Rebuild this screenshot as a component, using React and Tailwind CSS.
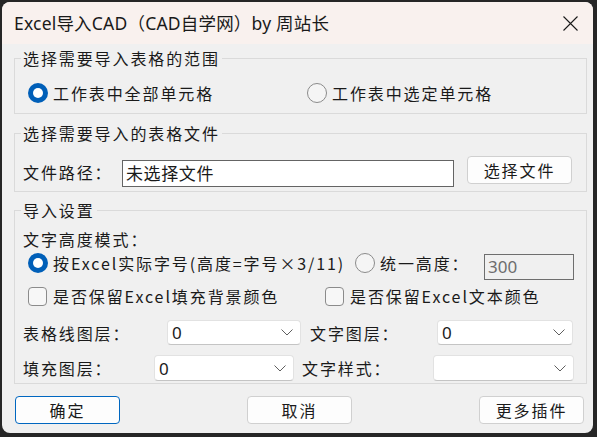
import React from "react";

// Polices : sans pour le titre et les champs, "song" approximé par Noto Sans CJK
const cjk = "font-['Noto_Sans_CJK_SC',sans-serif]";
const ui = "font-['Noto_Sans','Noto_Sans_CJK_SC',sans-serif]";

const Radio = ({ checked }) =>
  checked ? (
    <span className="w-[20px] h-[20px] rounded-full bg-[#005fb8] flex items-center justify-center shrink-0">
      <span className="w-[10px] h-[10px] rounded-full bg-white" />
    </span>
  ) : (
    <span className="w-[20px] h-[20px] rounded-full border border-[#8b8b8b] bg-[#f5f5f5] shrink-0" />
  );

const Checkbox = () => (
  <span className="w-[19px] h-[19px] rounded-[4px] border border-[#8b8b8b] bg-[#f7f7f7] shrink-0" />
);

const Chevron = () => (
  <svg width="12" height="7" viewBox="0 0 12 7" fill="none">
    <path d="M0.5 0.5 L6 6 L11.5 0.5" stroke="#5f5f5f" strokeWidth="1" />
  </svg>
);

const Select = ({ value, className }) => (
  <div
    className={`h-full bg-white border border-[#e2e2e2] border-b-[#c4c4c4] rounded-[4px] flex items-center justify-between pl-[4px] pr-[7px] ${className}`}
  >
    <span className={`${ui} text-[17px] leading-none text-[#1a1a1a]`}>{value}</span>
    <Chevron />
  </div>
);

const Button = ({ title, primary }) => (
  <button
    className={`w-[105px] h-[28px] rounded-[4px] bg-[#fdfdfd] ${cjk} text-[16px] tracking-[1.9px] text-[#1a1a1a] flex items-center justify-center ${
      primary
        ? "border-[1.5px] border-[#0067c0]"
        : "border border-[#d0d0d0]"
    }`}
  >
    {title}
  </button>
);

const Label = ({ children, className = "" }) => (
  <span className={`${cjk} text-[16px] leading-[20px] tracking-[1.9px] text-[#1a1a1a] whitespace-nowrap ${className}`}>
    {children}
  </span>
);

const Group = ({ title, className = "", children }) => (
  <fieldset className={`border border-[#dadada] ${className}`}>
    <legend className={`ml-[6px] px-[2px] ${cjk} text-[16px] leading-[18px] tracking-[1.9px] text-[#1a1a1a]`}>
      {title}
    </legend>
    {children}
  </fieldset>
);

export default function App() {
  return (
    <div className="w-[597px] h-[437px] bg-[#262626] pl-[2px] pt-[2px] pr-[4px] pb-[4px] flex">
      <div className="flex-1 rounded-[8px] overflow-hidden flex flex-col bg-[#f0f0f0]">
        {/* Barre de titre */}
        <div className="h-[42px] bg-[#f9f1ee] flex items-center justify-between pl-[12px] pr-[15px] shrink-0">
          <span className={`${ui} text-[17.5px] tracking-[0.2px] text-[#1a1a1a]`}>Excel导入CAD（CAD自学网）by 周站长</span>
          <svg width="15" height="15" viewBox="0 0 15 15">
            <path d="M0.5 0.5 L14.5 14.5 M14.5 0.5 L0.5 14.5" stroke="#1a1a1a" strokeWidth="1.1" />
          </svg>
        </div>

        <div className="flex-1 flex flex-col pl-[12px] pr-[6px]">
          {/* Plage */}
          <Group title="选择需要导入表格的范围" className="mt-[5px] pt-[16px] pb-[10px]">
            <div className="h-[20px] flex items-center pl-[13px]">
              <div className="flex items-center gap-[5px] w-[279px]">
                <Radio checked />
                <Label>工作表中全部单元格</Label>
              </div>
              <div className="flex items-center gap-[5px]">
                <Radio />
                <Label>工作表中选定单元格</Label>
              </div>
            </div>
          </Group>

          {/* Fichier */}
          <Group title="选择需要导入的表格文件" className="mt-[10px] pt-[14px] pb-[4px]">
            <div className="flex items-start pl-[8px]">
              <Label className="mt-[6px] w-[99px]">文件路径：</Label>
              <div className="mt-[4px] h-[27px] w-[332px] bg-white border border-[#646464] flex items-center pl-[3px]">
                <span className={`${ui} text-[17px] tracking-[0.6px] text-[#1a1a1a]`}>未选择文件</span>
              </div>
              <div className="ml-[13px]">
                <Button title="选择文件" />
              </div>
            </div>
          </Group>

          {/* Réglages */}
          <Group title="导入设置" className="mt-[9px] pb-[2px]">
            <div className="flex flex-col pl-[8px]">
              <div className="h-[20px] mt-[10px] flex items-center">
                <Label>文字高度模式：</Label>
              </div>

              <div className="h-[27px] mt-[4px] flex items-start pl-[5px]">
                <div className="h-[20px] flex items-center gap-[5px] w-[327px]">
                  <Radio checked />
                  <Label>按Excel实际字号(高度=字号×3/11)</Label>
                </div>
                <div className="h-[20px] flex items-center gap-[5px] w-[129px]">
                  <Radio />
                  <Label>统一高度：</Label>
                </div>
                <div className="mt-[1px] h-[26px] w-[90px] border border-[#6e6e6e] flex items-center pl-[3px]">
                  <span className={`${ui} text-[17px] text-[#6d6d6d]`}>300</span>
                </div>
              </div>

              <div className="h-[20px] mt-[6px] flex items-center pl-[5px]">
                <div className="flex items-center gap-[6px] w-[297px]">
                  <Checkbox />
                  <Label>是否保留Excel填充背景颜色</Label>
                </div>
                <div className="flex items-center gap-[6px]">
                  <Checkbox />
                  <Label>是否保留Excel文本颜色</Label>
                </div>
              </div>

              <div className="h-[25px] mt-[14px] flex items-center">
                <Label className="w-[144px]">表格线图层：</Label>
                <Select value="0" className="w-[134px]" />
                <Label className="ml-[9px] w-[127px]">文字图层：</Label>
                <Select value="0" className="w-[136px]" />
              </div>

              <div className="h-[26px] mt-[10px] flex items-center">
                <Label className="w-[131px]">填充图层：</Label>
                <Select value="0" className="w-[140px]" />
                <Label className="ml-[8px] w-[131px]">文字样式：</Label>
                <Select value="" className="w-[141px]" />
              </div>
            </div>
          </Group>

          {/* Boutons */}
          <div className="mt-[12px] flex justify-between pl-[1px] pr-[3px]">
            <Button title="确定" primary />
            <Button title="取消" />
            <Button title="更多插件" />
          </div>
        </div>
      </div>
    </div>
  );
}
